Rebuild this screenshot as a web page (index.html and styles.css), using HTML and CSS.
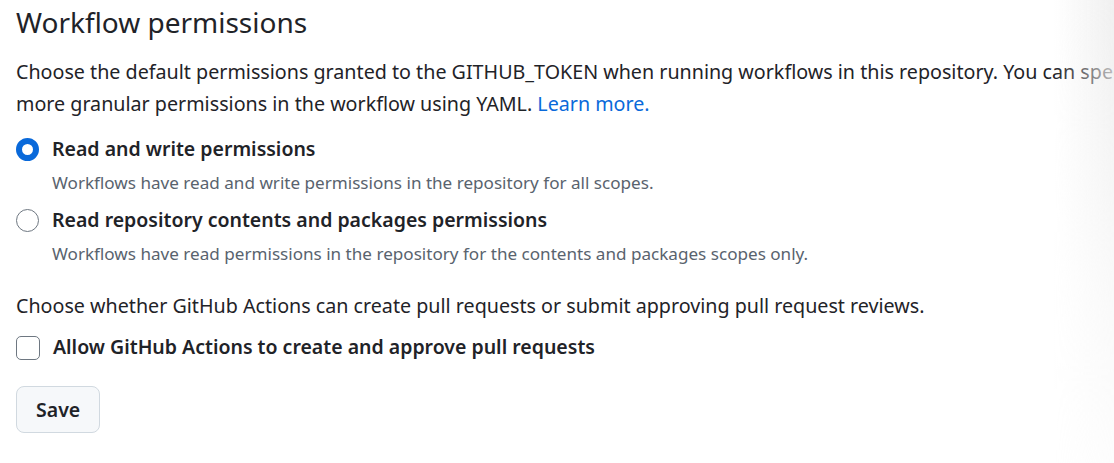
FILE: index.html
```html
<!DOCTYPE html>
<html lang="en">
<head>
<meta charset="UTF-8">
<meta name="viewport" content="width=device-width, initial-scale=1.0">
<title>Workflow permissions</title>
<link rel="stylesheet" href="styles.css">
</head>
<body>

<div class="page">
    <h2 class="heading">Workflow permissions</h2>
    <p class="intro">Choose the default permissions granted to the GITHUB_TOKEN when running workflows in this repository. You can specify more granular permissions in the workflow using YAML. <a href="#">Learn more.</a></p>

    <form class="perm-form">
        <div class="option">
            <input type="radio" id="readWrite" name="perm" checked>
            <div class="option-body">
                <label for="readWrite">Read and write permissions</label>
                <p class="note">Workflows have read and write permissions in the repository for all scopes.</p>
            </div>
        </div>
        <div class="option">
            <input type="radio" id="readOnly" name="perm">
            <div class="option-body">
                <label for="readOnly">Read repository contents and packages permissions</label>
                <p class="note">Workflows have read permissions in the repository for the contents and packages scopes only.</p>
            </div>
        </div>

        <p class="intro second">Choose whether GitHub Actions can create pull requests or submit approving pull request reviews.</p>

        <div class="option check">
            <input type="checkbox" id="allowPr">
            <div class="option-body">
                <label for="allowPr">Allow GitHub Actions to create and approve pull requests</label>
            </div>
        </div>

        <button type="button" class="btn">Save</button>
    </form>
</div>
<div class="edge-fade"></div>

</body>
</html>
```

FILE: styles.css
```css
html, body {
    margin: 0;
    padding: 0;
    background-color: #fff;
    overflow: hidden;
}
body {
    font-family: "Noto Sans", "Open Sans", sans-serif;
    color: #1f2328;
    width: 1114px;
    height: 463px;
    position: relative;
}
.page {
    padding: 0 0 0 16px;
    width: 1140px;
}
.heading {
    margin: 0;
    padding-top: 2px;
    font-size: 28px;
    font-weight: 400;
    line-height: 40px;
}
.intro {
    margin: 14px 0 0;
    font-size: 19.7px;
    line-height: 32px;
}
.intro a {
    color: #0969da;
    text-decoration: none;
}
.perm-form {
    margin: 12px 0 0;
}
.option {
    display: flex;
    align-items: flex-start;
    gap: 13px;
    margin-bottom: 3px;
}
.option input[type="radio"] {
    appearance: none;
    width: 23px;
    height: 23px;
    margin: 6px 0 0;
    border: 1px solid #6e7781;
    border-radius: 50%;
    box-sizing: border-box;
    background: #fff;
}
.option input[type="radio"]:checked {
    border: 6px solid #0969da;
}
.option input[type="checkbox"] {
    appearance: none;
    width: 24px;
    height: 24px;
    margin: 6px 0 0;
    border: 1px solid #6e7781;
    border-radius: 5px;
    box-sizing: border-box;
    background: #fff;
}
.option label {
    display: block;
    font-size: 19.5px;
    font-weight: 600;
    line-height: 34px;
}
.note {
    margin: 0;
    font-size: 17.1px;
    line-height: 34px;
    color: #59636e;
}
.intro.second {
    margin-top: 19px;
}
.check {
    margin-top: 8px;
}
.btn {
    margin-top: 19px;
    padding: 0 19px;
    height: 47px;
    font-family: inherit;
    font-size: 19.5px;
    font-weight: 600;
    color: #1f2328;
    background-color: #f6f8fa;
    border: 1px solid #d1d9e0;
    border-radius: 8px;
    cursor: pointer;
}
.edge-fade {
    position: absolute;
    top: 0;
    right: 0;
    width: 60px;
    height: 100%;
    background: linear-gradient(to right, rgba(255,255,255,0), rgba(238,238,238,0.9));
    -webkit-mask-image: linear-gradient(to bottom, #000 0%, rgba(0,0,0,0.4) 60%, rgba(0,0,0,0.15) 100%);
}
```
